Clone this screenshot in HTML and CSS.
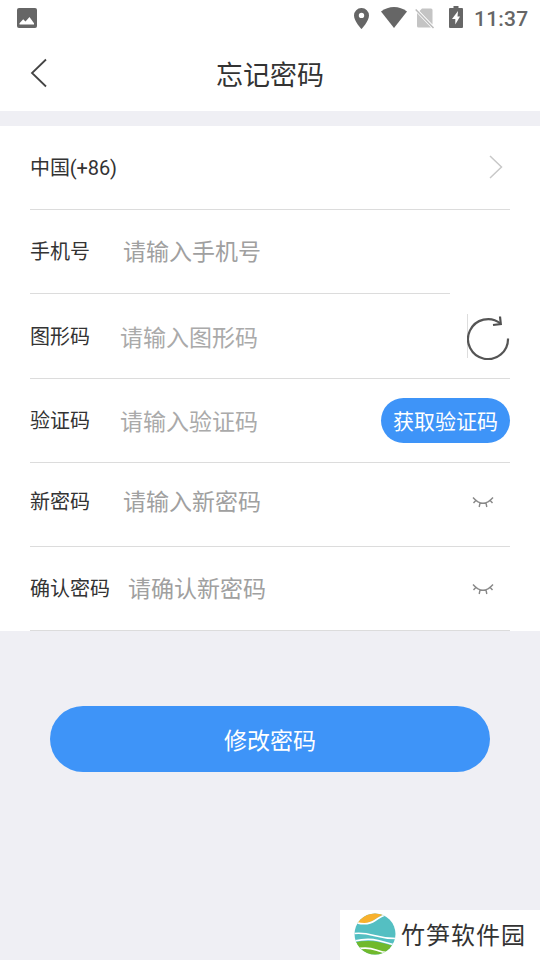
FILE: index.html
```
<!DOCTYPE html>
<html lang="zh-CN">
<head>
<meta charset="utf-8">
<title>忘记密码</title>
<link rel="stylesheet" href="styles.css">
</head>
<body>
<div class="status">
  <svg class="photo" width="20" height="20" viewBox="0 0 20 20"><rect width="20" height="20" rx="2" fill="#666"/><path d="M2.500 16.500v-1.200l3.700-4 2.300 2.300 4-4.600 4.500 6.300v1.200z" fill="#fff"/></svg>
  <svg class="pin" width="15" height="21" viewBox="0 0 15 21"><path fill-rule="evenodd" d="M7.500 0A7.400 7.400 0 0 0 0 7.400C0 13 7.500 21 7.500 21S15 13 15 7.400A7.400 7.400 0 0 0 7.500 0zm0 4.700a2.700 2.700 0 1 1 0 5.400 2.700 2.700 0 0 1 0-5.400z" fill="#666"/></svg>
  <svg class="wifi" width="26" height="21" viewBox="0 0 26 21"><path d="M0 4.500C7.500-1.500 18.500-1.500 26 4.500L13 21z" fill="#666"/></svg>
  <svg class="sim" width="20" height="21" viewBox="0 0 20 21"><path d="M7 .5H16q1.500 0 1.500 1.500V16.500L4.500 3zM2 5L16 19.500H3.500Q2 19.500 2 18z" fill="#c4c4c4"/><path d="M.7 1.500L18.500 20" stroke="#bbb" stroke-width="1.500"/></svg>
  <svg class="battery" width="14" height="22" viewBox="0 0 14 22"><path d="M1 2h3.500V0h5v2H13q1 0 1 1v18q0 1-1 1H1q-1 0-1-1V3q0-1 1-1z" fill="#666"/><path d="M9 5L3 13h3.300v5.500L11 10.500H8.500z" fill="#fff"/></svg>
  <span class="clock">11:37</span>
</div>
<header class="header">
  <svg class="back" width="18" height="30" viewBox="0 0 18 30"><path d="M16 1.500L2 15l14 13.500" fill="none" stroke="#444" stroke-width="1.800"/></svg>
  <h1 class="title">忘记密码</h1>
</header>
<main class="form">
  <div class="row">
    <span class="label country">中国(+86)</span>
    <svg class="arrow" width="14" height="24" viewBox="0 0 14 24"><path d="M1 1l11.500 11L1 23" fill="none" stroke="#c8c8c8" stroke-width="1.500"/></svg>
  </div>
  <div class="row short">
    <span class="label">手机号</span>
    <span class="hint wide">请输入手机号</span>
  </div>
  <div class="row tall">
    <span class="label">图形码</span>
    <span class="hint light">请输入图形码</span>
    <svg class="refresh" width="43" height="46" viewBox="0 0 43 46"><path d="M.5 0v44" stroke="#ddd"/><path d="M33.500 9.500A20 20 0 1 0 41 24.500" fill="none" stroke="#555" stroke-width="2.200"/><path d="M33 2.500l.8 7.500-7.800 1" fill="none" stroke="#505050" stroke-width="2.200"/></svg>
  </div>
  <div class="row">
    <span class="label">验证码</span>
    <span class="hint light">请输入验证码</span>
    <span class="get-code">获取验证码</span>
  </div>
  <div class="row raised">
    <span class="label">新密码</span>
    <span class="hint wide">请输入新密码</span>
    <svg class="eye" width="22" height="12" viewBox="0 0 22 12"><path d="M1 1.500Q11 13 21 1.500M4 4.200L1.500 7M18 4.200l2.500 2.800M8 7L7.200 11M14 7l.8 4" fill="none" stroke="#888" stroke-width="1.400"/></svg>
  </div>
  <div class="row">
    <span class="label">确认密码</span>
    <span class="hint confirm">请确认新密码</span>
    <svg class="eye" width="22" height="12" viewBox="0 0 22 12"><path d="M1 1.500Q11 13 21 1.500M4 4.200L1.500 7M18 4.200l2.500 2.800M8 7L7.200 11M14 7l.8 4" fill="none" stroke="#888" stroke-width="1.400"/></svg>
  </div>
</main>
<div class="submit">修改密码</div>
<footer class="brand">
  <svg class="logo" width="42" height="42" viewBox="0 0 42 42">
    <clipPath id="disc"><circle cx="21" cy="21" r="20.500"/></clipPath>
    <g clip-path="url(#disc)">
      <path d="M0 0h42v42H0z" fill="#54bfc2"/>
      <path d="M0 29.500q14-2.500 24-.5t18 5v8H0z" fill="#70b92c"/>
      <path d="M0 0h33Q26 2.500 20 7T3 10z" fill="#f8b12d"/>
      <path d="M3 9.800Q14 12.500 21 7.500T33 1.500M0 20.500q9-1 20 2t22 3M0 28q14-3 24-.5t18 5M0 36.500q13-3 22 .5t16 2.500" fill="none" stroke="#fff" stroke-width="1.700"/>
    </g>
  </svg>
  <span class="brand-name">竹笋软件园</span>
</footer>
</body>
</html>
```
FILE: styles.css
```
* { box-sizing: border-box; }
body {
  margin: 0;
  height: 960px;
  display: flex;
  flex-direction: column;
  background: #efeff4;
  font-family: Roboto, "Noto Sans CJK SC", sans-serif;
  color: #333;
  white-space: nowrap;
  overflow: hidden;
}
svg { display: block; flex: none; }
.status {
  height: 36px;
  flex: none;
  display: flex;
  align-items: center;
  background: #fff;
  padding: 0 12px 0 17px;
}
.pin { margin-left: 317px; }
.wifi { margin-left: 12px; margin-top: -2px; }
.sim { margin-left: 8px; }
.battery { margin-left: 14px; margin-top: -2px; }
.clock {
  margin-left: 11px;
  padding-top: 2px;
  font-size: 21px;
  font-weight: 500;
  letter-spacing: .2px;
  color: #666;
  line-height: 24px;
}
.header {
  height: 75px;
  flex: none;
  display: grid;
  grid-template-columns: 60px 1fr 60px;
  align-items: center;
  background: #fff;
}
.back { margin-left: 30px; margin-top: -2px; }
.title {
  margin: 0;
  padding-top: 5px;
  font-size: 27px;
  line-height: 40px;
  font-weight: 400;
  text-align: center;
}
.form {
  margin-top: 15px;
  background: #fff;
  padding: 0 30px;
}
.row {
  height: 84px;
  display: flex;
  align-items: center;
  border-bottom: 1px solid #dcdcdc;
}
.short { width: 420px; }
.tall { height: 85px; }
.raised { padding-bottom: 6px; }
.label { padding-top: 1px; font-size: 20px; line-height: 30px; color: #333; }
.country { letter-spacing: -.1px; }
.hint {
  margin-left: 30px;
  padding-top: 3px;
  font-size: 23px;
  line-height: 34px;
  color: #a0a0a0;
}
.light { padding-top: 5px; color: #aaa; }
.wide { margin-left: 33px; }
.confirm { margin-left: 18px; }
.arrow { margin-left: auto; margin-right: 7px; margin-top: -2px; }
.refresh { margin-left: auto; margin-top: 2px; }
.get-code {
  margin-left: auto;
  width: 129px;
  height: 45px;
  border-radius: 23px;
  background: #3e94f8;
  color: #fff;
  font-size: 21px;
  line-height: 49px;
  text-align: center;
}
.eye { margin-left: auto; margin-right: 16px; }
.submit {
  margin: 75px 50px 0;
  height: 66px;
  flex: none;
  border-radius: 33px;
  background: #3e94f8;
  color: #fff;
  font-size: 23px;
  line-height: 71px;
  text-align: center;
}
.brand {
  margin-top: auto;
  align-self: flex-end;
  width: 200px;
  height: 50px;
  display: flex;
  align-items: center;
  background: #fff;
  padding-left: 14px;
}
.logo { margin-top: -2px; }
.brand-name {
  margin-left: 5px;
  padding-top: 2px;
  font-size: 24px;
  letter-spacing: 1px;
  line-height: 36px;
  color: #333;
}
```
